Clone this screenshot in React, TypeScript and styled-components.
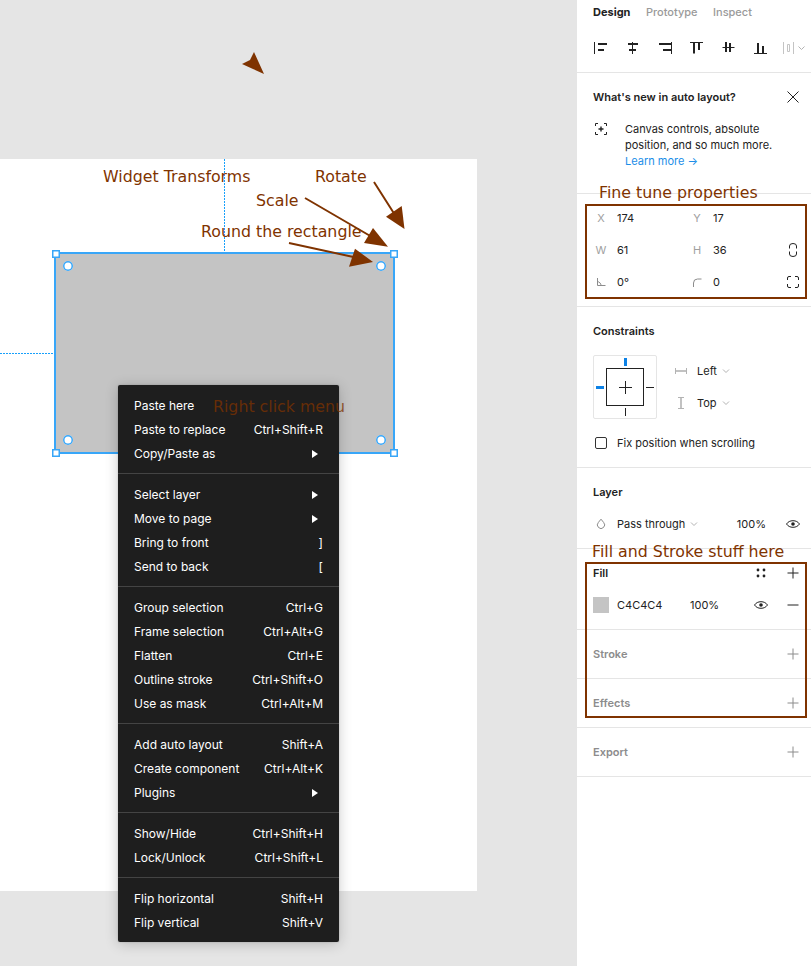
import * as React from "react"
import styled, { createGlobalStyle } from "styled-components"

const GlobalStyle = createGlobalStyle`
  html, body {
    margin: 0;
    padding: 0;
    background: #fff;
  }
  body {
    font-family: Inter, "Liberation Sans", sans-serif;
    font-size: 11px;
    color: #222;
  }
`

const BROWN = "#7f3300"
const BLUE = "#38a6f8"

const Page = styled.div`
  position: relative;
  display: flex;
  width: 811px;
  height: 966px;
  overflow: hidden;
`

/* ---------- canvas ---------- */

const Canvas = styled.div`
  position: relative;
  width: 577px;
  height: 966px;
  flex: none;
  background: #e5e5e5;
`

const Frame = styled.div`
  position: absolute;
  left: 0;
  top: 159px;
  width: 477px;
  height: 732px;
  background: #fff;
`

const GuideV = styled.div`
  position: absolute;
  left: 224px;
  top: 159px;
  width: 1px;
  height: 93px;
  background: repeating-linear-gradient(to bottom, #18a0fb 0 2px, transparent 2px 3px);
`

const GuideH = styled.div`
  position: absolute;
  left: 0;
  top: 353px;
  width: 54px;
  height: 1px;
  background: repeating-linear-gradient(to right, #18a0fb 0 2px, transparent 2px 3px);
`

const Selection = styled.div`
  position: absolute;
  left: 54px;
  top: 252px;
  width: 337px;
  height: 198px;
  background: #c4c4c4;
  border: 2px solid ${BLUE};
`

const Handle = styled.span<{ $x: number; $y: number }>`
  position: absolute;
  left: ${p => p.$x}px;
  top: ${p => p.$y}px;
  width: 8px;
  height: 8px;
  background: #fff;
  box-shadow: inset 0 0 0 1.5px ${BLUE};
`

const RadiusDot = styled.span<{ $x: number; $y: number }>`
  position: absolute;
  left: ${p => p.$x}px;
  top: ${p => p.$y}px;
  width: 10px;
  height: 10px;
  background: #fff;
  box-shadow: inset 0 0 0 1.5px ${BLUE};
  border-radius: 50%;
`

const Menu = styled.div`
  position: absolute;
  left: 118px;
  top: 385px;
  width: 221px;
  box-sizing: border-box;
  padding: 9px 0 7px;
  background: #1e1e1e;
  border-radius: 2px;
  box-shadow: 0 2px 14px rgba(0, 0, 0, 0.2), 0 0 2px rgba(0, 0, 0, 0.2);
  color: #fff;
  font-size: 12px;
`

const MenuRow = styled.div`
  display: flex;
  align-items: center;
  justify-content: space-between;
  height: 24px;
  padding: 0 16px;
  line-height: 22px;
`

const MenuDivider = styled.div`
  height: 1px;
  margin: 7px 0 9px;
  background: #444;
`

const MenuArrow = styled.span`
  width: 0;
  height: 0;
  margin-right: 5px;
  border-left: 6px solid #fff;
  border-top: 4px solid transparent;
  border-bottom: 4px solid transparent;
`

/* ---------- right panel ---------- */

const Panel = styled.div`
  width: 234px;
  flex: none;
  box-sizing: border-box;
  display: flex;
  flex-direction: column;
  background: #fff;
  font-size: 11px;
  color: #222;
`

const Section = styled.section<{ $h: number; $pad?: number }>`
  height: ${p => p.$h}px;
  flex: none;
  box-sizing: border-box;
  padding: ${p => p.$pad ?? 12}px 10px 0 16px;
  border-bottom: 1px solid #e5e5e5;
`

const Tabs = styled.div`
  display: flex;
  gap: 15.5px;
  height: 24px;
  align-items: center;
  margin-top: -12px;
  font-size: 11px;
`

const Tab = styled.span<{ $active?: boolean }>`
  font-weight: ${p => (p.$active ? 700 : 500)};
  color: ${p => (p.$active ? "#222" : "#9a9a9a")};
`

const AlignBar = styled.div`
  display: flex;
  align-items: center;
  gap: 16px;
  margin: 12px -10px 0 -1px;
  height: 24px;
`

const Row = styled.div<{ $h?: number; $top?: number }>`
  display: flex;
  align-items: center;
  height: ${p => p.$h ?? 32}px;
  margin-top: ${p => p.$top ?? 0}px;
`

const Title = styled.div<{ $muted?: boolean }>`
  font-weight: 600;
  font-size: 11px;
  color: ${p => (p.$muted ? "#8c8c8c" : "#222")};
`

const Spacer = styled.div`
  flex: 1;
`

const Tip = styled.div`
  display: flex;
  margin-top: 12px;
`

const TipIcon = styled.div`
  width: 32px;
  flex: none;
  height: 16px;
`

const TipText = styled.div`
  line-height: 16px;
`

const Link = styled.a`
  color: #1b8ee8;
`

const Label = styled.span<{ $mr?: number }>`
  width: 16px;
  flex: none;
  margin-right: ${p => p.$mr ?? 8}px;
  display: flex;
  justify-content: center;
  color: #a0a0a0;
  font-size: 11px;
`

const Value = styled.span<{ $w: number }>`
  width: ${p => p.$w}px;
  flex: none;
`

const Percent = styled.span`
  margin-right: 19px;
`

const Pin = styled.div`
  position: relative;
  width: 64px;
  height: 64px;
  flex: none;
  box-sizing: border-box;
  border: 1px solid #e5e5e5;
  border-radius: 2px;
`

const PinBox = styled.div`
  position: absolute;
  left: 12px;
  top: 12px;
  width: 38px;
  height: 38px;
  box-sizing: border-box;
  border: 1px solid #222;
`

const PinTick = styled.span<{ $x: number; $y: number; $w: number; $h: number; $on?: boolean }>`
  position: absolute;
  left: ${p => p.$x}px;
  top: ${p => p.$y}px;
  width: ${p => p.$w}px;
  height: ${p => p.$h}px;
  background: ${p => (p.$on ? "#0d82e6" : "#222")};
`

const ConstraintCols = styled.div`
  display: flex;
  align-items: flex-start;
  margin-top: 12px;
`

const ConstraintList = styled.div`
  margin-left: 17px;
`

const SelectText = styled.span<{ $ml?: number }>`
  margin-left: ${p => p.$ml ?? 0}px;
  margin-right: 5px;
`

const Checkbox = styled.span`
  width: 12px;
  height: 12px;
  flex: none;
  margin: 0 10px 0 2px;
  box-sizing: border-box;
  border: 1px solid #333;
  border-radius: 2px;
`

const Swatch = styled.span`
  width: 16px;
  height: 16px;
  flex: none;
  margin-right: 8px;
  background: #c4c4c4;
`

const IconSlot = styled.span<{ $mr?: number }>`
  width: 16px;
  height: 16px;
  flex: none;
  display: flex;
  margin-right: ${p => p.$mr ?? 0}px;
`

/* ---------- annotations ---------- */

const Note = styled.div<{ $x: number; $y: number; $dim?: boolean }>`
  position: absolute;
  left: ${p => p.$x}px;
  top: ${p => p.$y}px;
  font-family: "DejaVu Sans", sans-serif;
  font-size: 15.8px;
  line-height: 20px;
  white-space: nowrap;
  color: ${BROWN};
  opacity: ${p => (p.$dim ? 0.75 : 1)};
`

const Outline = styled.div<{ $y: number; $h: number }>`
  position: absolute;
  left: 585px;
  top: ${p => p.$y}px;
  width: 222px;
  height: ${p => p.$h}px;
  box-sizing: border-box;
  border: 2px solid ${BROWN};
`

const ArrowLayer = styled.svg`
  position: absolute;
  left: 0;
  top: 0;
  width: 811px;
  height: 966px;
  pointer-events: none;
`

const DistributeSvg = styled.svg`
  flex: none;
  margin-left: -1px;
`

/* ---------- icons ---------- */

const Ico = ({ children, muted }: { children: React.ReactNode; muted?: boolean }) => (
  <svg
    width="16"
    height="16"
    viewBox="0 0 16 16"
    fill="none"
    stroke={muted ? "#8c8c8c" : "#222"}
    strokeWidth="1"
  >
    {children}
  </svg>
)

const Plus = ({ muted }: { muted?: boolean }) => (
  <Ico muted={muted}>
    <path d="M8 2.5v11M2.5 8h11" />
  </Ico>
)

const Minus = () => (
  <Ico>
    <path d="M2.5 8h11" />
  </Ico>
)

const Eye = () => (
  <Ico>
    <path d="M1.5 8C3 5.8 5.2 4.7 8 4.7s5 1.1 6.5 3.3C13 10.2 10.8 11.3 8 11.3S3 10.2 1.5 8z" />
    <circle cx="8" cy="8" r="1.8" fill="#222" stroke="none" />
  </Ico>
)

const Chevron = () => (
  <svg width="8" height="6" viewBox="0 0 8 6" fill="none" stroke="#b3b3b3">
    <path d="M1 1.5l3 3 3-3" />
  </svg>
)

const Close = () => (
  <Ico>
    <path d="M2.5 2.5l11 11M13.5 2.5l-11 11" />
  </Ico>
)

// thin = the guide line, thick = the two bars aligned to it
const alignIcons = [
  { thin: "M2.5 2v12", thick: "M6 4h9M6 10h6" },
  { thin: "M8.5 2v12", thick: "M4 4h10M5 10h7" },
  { thin: "M15.5 2v12", thick: "M3 4h12M7 10h8" },
  { thin: "M2 2.5h13", thick: "M6 3v10.5M11 3v7" },
  { thin: "M2.5 7.5h12", thick: "M6 2v10M10 3v9" },
  { thin: "M2 13.5h13", thick: "M6 3v10M11 6v7" },
]

const Distribute = () => (
  <DistributeSvg width="26" height="16" viewBox="0 0 26 16" fill="none" stroke="#c4c4c4">
    <path d="M0.5 2v12M10.5 2v12M4.5 4.5h2v7h-2z" />
    <path d="M15.5 6.5l3 3 3-3" stroke="#b3b3b3" />
  </DistributeSvg>
)

const FocusPlus = () => (
  <Ico>
    <path d="M2.5 5V2.5H5M11 2.5h2.5V5M13.5 11v2.5H11M5 13.5H2.5V11" />
    <path d="M8 5.5v5M5.5 8h5" strokeWidth="1.4" />
  </Ico>
)

const LinkProportions = () => (
  <Ico>
    <path d="M4.5 6.5V4a3.5 2.5 0 0 1 7 0v2.5M4.5 9.5V12a3.5 2.5 0 0 0 7 0V9.5" />
  </Ico>
)

const Corners = () => (
  <Ico>
    <path d="M2.5 6V4a1.5 1.5 0 0 1 1.5-1.5h2M10 2.5h2A1.5 1.5 0 0 1 13.5 4v2M13.5 10v2a1.5 1.5 0 0 1-1.5 1.5h-2M6 13.5H4A1.5 1.5 0 0 1 2.5 12v-2" />
  </Ico>
)

const AngleIcon = () => (
  <svg width="10" height="10" viewBox="0 0 10 10" fill="none" stroke="#8c8c8c">
    <path d="M1.5 1v7.5h8M1.5 4.5c2 .4 3.4 2 3.6 4" />
  </svg>
)

const RadiusIcon = () => (
  <svg width="10" height="10" viewBox="0 0 10 10" fill="none" stroke="#8c8c8c">
    <path d="M1.5 10V6a4 4 0 0 1 4-4h4" />
  </svg>
)

const HConstraint = () => (
  <svg width="14" height="8" viewBox="0 0 14 8" fill="none" stroke="#b3b3b3">
    <path d="M1.5 1v6M12.5 1v6" />
    <path d="M2 4h10" strokeWidth="1.6" />
  </svg>
)

const VConstraint = () => (
  <svg width="14" height="14" viewBox="0 0 14 14" fill="none" stroke="#b3b3b3">
    <path d="M4 1.5h6M4 12.5h6" />
    <path d="M7 2v10" strokeWidth="1.6" />
  </svg>
)

const Drop = () => (
  <svg width="10" height="12" viewBox="0 0 10 12" fill="none" stroke="#8c8c8c">
    <path d="M5 1.2L7.6 4.4a3.6 3.6 0 1 1-5.2 0z" />
  </svg>
)

const Styles = () => (
  <Ico>
    <g fill="#222" stroke="none">
      <circle cx="5" cy="5" r="1.4" />
      <circle cx="11" cy="5" r="1.4" />
      <circle cx="5" cy="11" r="1.4" />
      <circle cx="11" cy="11" r="1.4" />
    </g>
  </Ico>
)

/* ---------- data ---------- */

type MenuItem = { label: string; hint?: string; sub?: boolean }

const menuGroups: MenuItem[][] = [
  [
    { label: "Paste here" },
    { label: "Paste to replace", hint: "Ctrl+Shift+R" },
    { label: "Copy/Paste as", sub: true },
  ],
  [
    { label: "Select layer", sub: true },
    { label: "Move to page", sub: true },
    { label: "Bring to front", hint: "]" },
    { label: "Send to back", hint: "[" },
  ],
  [
    { label: "Group selection", hint: "Ctrl+G" },
    { label: "Frame selection", hint: "Ctrl+Alt+G" },
    { label: "Flatten", hint: "Ctrl+E" },
    { label: "Outline stroke", hint: "Ctrl+Shift+O" },
    { label: "Use as mask", hint: "Ctrl+Alt+M" },
  ],
  [
    { label: "Add auto layout", hint: "Shift+A" },
    { label: "Create component", hint: "Ctrl+Alt+K" },
    { label: "Plugins", sub: true },
  ],
  [
    { label: "Show/Hide", hint: "Ctrl+Shift+H" },
    { label: "Lock/Unlock", hint: "Ctrl+Shift+L" },
  ],
  [
    { label: "Flip horizontal", hint: "Shift+H" },
    { label: "Flip vertical", hint: "Shift+V" },
  ],
]

const App = () => {
  return (
    <Page>
      <GlobalStyle />

      <Canvas>
        <Frame />
        <GuideV />
        <GuideH />
        <Selection>
          <RadiusDot $x={7} $y={7} />
          <RadiusDot $x={320} $y={7} />
          <RadiusDot $x={7} $y={181} />
          <RadiusDot $x={320} $y={181} />
          <Handle $x={-4.5} $y={-4.5} />
          <Handle $x={333.5} $y={-4.5} />
          <Handle $x={-4.5} $y={195} />
          <Handle $x={333.5} $y={195} />
        </Selection>
        <Menu>
          {menuGroups.map((group, i) => (
            <React.Fragment key={i}>
              {i > 0 && <MenuDivider />}
              {group.map(item => (
                <MenuRow key={item.label}>
                  <span>{item.label}</span>
                  {item.hint && <span>{item.hint}</span>}
                  {item.sub && <MenuArrow />}
                </MenuRow>
              ))}
            </React.Fragment>
          ))}
        </Menu>
      </Canvas>

      <Panel>
        <Section $h={73} $pad={12}>
          <Tabs>
            <Tab $active>Design</Tab>
            <Tab>Prototype</Tab>
            <Tab>Inspect</Tab>
          </Tabs>
          <AlignBar>
            {alignIcons.map(icon => (
              <Ico key={icon.thin}>
                <path d={icon.thin} />
                <path d={icon.thick} strokeWidth="2" />
              </Ico>
            ))}
            <Distribute />
          </AlignBar>
        </Section>

        <Section $h={121}>
          <Row $h={24}>
            <Title>What's new in auto layout?</Title>
            <Spacer />
            <IconSlot>
              <Close />
            </IconSlot>
          </Row>
          <Tip>
            <TipIcon>
              <FocusPlus />
            </TipIcon>
            <TipText>
              Canvas controls, absolute
              <br />
              position, and so much more.
              <br />
              <Link>Learn more →</Link>
            </TipText>
          </Tip>
        </Section>

        <Section $h={113} $pad={8}>
          <Row>
            <Label>X</Label>
            <Value $w={72}>174</Value>
            <Label>Y</Label>
            <Value $w={72}>17</Value>
          </Row>
          <Row>
            <Label>W</Label>
            <Value $w={72}>61</Value>
            <Label>H</Label>
            <Value $w={72}>36</Value>
            <IconSlot>
              <LinkProportions />
            </IconSlot>
          </Row>
          <Row>
            <Label><AngleIcon /></Label>
            <Value $w={72}>0°</Value>
            <Label><RadiusIcon /></Label>
            <Value $w={72}>0</Value>
            <IconSlot>
              <Corners />
            </IconSlot>
          </Row>
        </Section>

        <Section $h={161}>
          <Row $h={24}>
            <Title>Constraints</Title>
          </Row>
          <ConstraintCols>
            <Pin>
              <PinBox>
                <PinTick $x={12} $y={18} $w={13} $h={1} />
                <PinTick $x={18} $y={12} $w={1} $h={13} />
              </PinBox>
              <PinTick $on $x={30} $y={2} $w={3} $h={8} />
              <PinTick $x={31} $y={52} $w={1} $h={8} />
              <PinTick $on $x={2} $y={30} $w={8} $h={3} />
              <PinTick $x={52} $y={31} $w={8} $h={1} />
            </Pin>
            <ConstraintList>
              <Row>
                <HConstraint />
                <SelectText $ml={9}>Left</SelectText>
                <Chevron />
              </Row>
              <Row>
                <VConstraint />
                <SelectText $ml={9}>Top</SelectText>
                <Chevron />
              </Row>
            </ConstraintList>
          </ConstraintCols>
          <Row $h={24} $top={12}>
            <Checkbox />
            Fix position when scrolling
          </Row>
        </Section>

        <Section $h={81}>
          <Row $h={24}>
            <Title>Layer</Title>
          </Row>
          <Row $top={4}>
            <Label><Drop /></Label>
            <SelectText>Pass through</SelectText>
            <Chevron />
            <Spacer />
            <Percent>100%</Percent>
            <IconSlot>
              <Eye />
            </IconSlot>
          </Row>
        </Section>

        <Section $h={81}>
          <Row $h={24}>
            <Title>Fill</Title>
            <Spacer />
            <IconSlot $mr={16}>
              <Styles />
            </IconSlot>
            <IconSlot>
              <Plus />
            </IconSlot>
          </Row>
          <Row $top={4}>
            <Swatch />
            <Value $w={73}>C4C4C4</Value>
            <span>100%</span>
            <Spacer />
            <IconSlot $mr={16}>
              <Eye />
            </IconSlot>
            <IconSlot>
              <Minus />
            </IconSlot>
          </Row>
        </Section>

        {["Stroke", "Effects", "Export"].map(name => (
          <Section key={name} $h={49}>
            <Row $h={24}>
              <Title $muted>{name}</Title>
              <Spacer />
              <IconSlot>
                <Plus muted />
              </IconSlot>
            </Row>
          </Section>
        ))}
      </Panel>

      <Note $x={103} $y={167}>Widget Transforms</Note>
      <Note $x={315} $y={167}>Rotate</Note>
      <Note $x={256} $y={191}>Scale</Note>
      <Note $x={201} $y={222}>Round the rectangle</Note>
      <Note $x={213} $y={397} $dim>Right click menu</Note>
      <Note $x={599} $y={183}>Fine tune properties</Note>
      <Note $x={592} $y={542}>Fill and Stroke stuff here</Note>

      <Outline $y={204} $h={95} />
      <Outline $y={562} $h={156} />

      <ArrowLayer viewBox="0 0 811 966" fill={BROWN} stroke="none">
        <polygon points="254,52 264,74 253,69 242,64 250,60" />
        <path d="M374 182L395 215M305 198L372 237M289 243L358 258" stroke={BROWN} strokeWidth="2" />
        <polygon points="404.5,229 386,216.7 401.7,206" />
        <polygon points="388,246.7 364,243 373,228" />
        <polygon points="373,262 349,266.7 355,248.7" />
      </ArrowLayer>
    </Page>
  )
}

export default App
